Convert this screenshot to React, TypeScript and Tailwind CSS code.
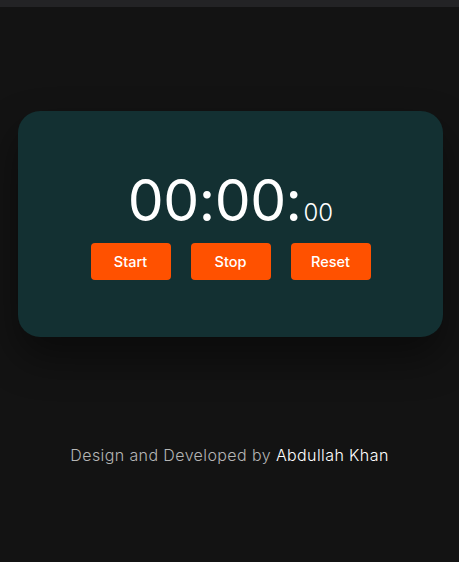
export default function App() {
  return (
    <div className="min-h-[562px] bg-[#131313] font-['Inter',sans-serif]">
      <div className="h-[7px] bg-[#232325]" />
      <div className="pl-[18px] pr-[16px] pt-[104px]">
        <div className="flex h-[226px] flex-col items-center justify-center rounded-[22px] bg-[#133032] pt-[4px] shadow-[0_20px_40px_rgba(0,0,0,0.45)]">
          <div className="flex items-baseline text-white">
            <span className="text-[57px] font-normal leading-none tracking-[-0.5px]">00:00:</span>
            <span className="ml-[2px] text-[24px] font-light leading-none">00</span>
          </div>
          <div className="mt-[14px] flex gap-[20px]">
            {["Start", "Stop", "Reset"].map((label) => (
              <button
                key={label}
                className="h-[37px] w-[80px] rounded-[4px] bg-[#ff5100] text-[14.5px] font-medium text-white"
              >
                {label}
              </button>
            ))}
          </div>
        </div>
      </div>
      <p className="mt-[106px] text-center text-[16px] font-light tracking-[0.4px] text-[#b5b5b5]">
        Design and Developed by <span className="text-white">Abdullah Khan</span>
      </p>
    </div>
  );
}
